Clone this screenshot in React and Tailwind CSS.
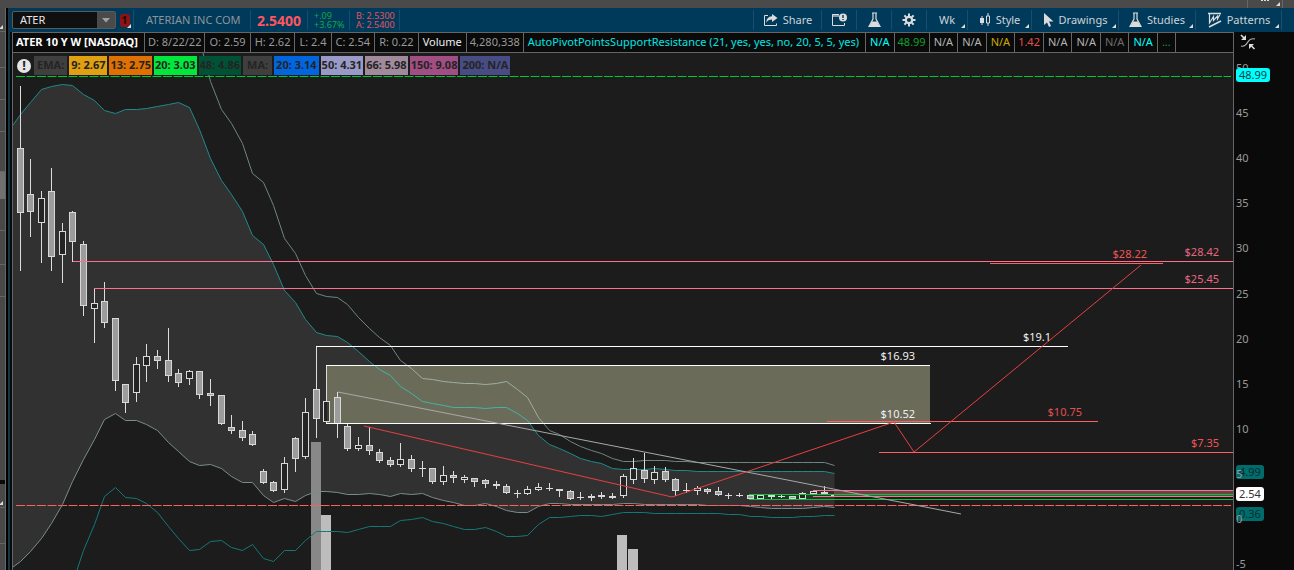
const INFO_CELLS = [
  { text: "ATER 10 Y W [NASDAQ]", style: "font-bold text-white pl-[3px] pr-[6px]" },
  { text: "D: 8/22/22", style: "text-[#999999] px-[3px]" },
  { text: "O: 2.59", style: "text-[#999999] px-[4px]" },
  { text: "H: 2.62", style: "text-[#999999] px-[4px]" },
  { text: "L: 2.4", style: "text-[#999999] px-[4px]" },
  { text: "C: 2.54", style: "text-[#999999] px-[4px]" },
  { text: "R: 0.22", style: "text-[#999999] px-[4px]" },
  { text: "Volume", style: "text-[#eeeeee] px-[4px]" },
  { text: "4,280,338", style: "text-[#999999] px-[3px]" },
  {
    text: "AutoPivotPointsSupportResistance (21, yes, yes, no, 20, 5, 5, yes)",
    style: "text-[#00e5e5] pl-[4px] pr-[6px]",
  },
  { text: "N/A", style: "text-[#00ffff] px-[4px]" },
  { text: "48.99", style: "text-[#0ea02c] px-[3px]" },
  { text: "N/A", style: "text-[#b4b4b4] px-[4px]" },
  { text: "N/A", style: "text-[#b4b4b4] px-[4px]" },
  { text: "N/A", style: "text-[#ccaa00] px-[4px]" },
  { text: "1.42", style: "text-[#e05050] px-[3px]" },
  { text: "N/A", style: "text-[#b4b4b4] px-[4px]" },
  { text: "N/A", style: "text-[#b4b4b4] px-[4px]" },
  { text: "N/A", style: "text-[#6e6e6e] px-[4px]" },
  { text: "N/A", style: "text-[#00ffff] px-[4px]" },
  { text: "...", style: "text-[#0ea02c] px-[4px]" },
];

const AVERAGES = [
  { text: "EMA:", style: "bg-[#3f3f3f] px-[3px]" },
  { text: "9: 2.67", style: "bg-[#e0a010] px-[2px]" },
  { text: "13: 2.75", style: "bg-[#e07000] px-[1px]" },
  { text: "20: 3.03", style: "bg-[#00e83c] px-[1px]" },
  { text: "48: 4.86", style: "bg-[#005236] px-[1px]" },
  { text: "MA:", style: "bg-[#3f3f3f] px-[4px]" },
  { text: "20: 3.14", style: "bg-[#0066e0] px-[2px]" },
  { text: "50: 4.31", style: "bg-[#9a9ac8] px-[1px]" },
  { text: "66: 5.98", style: "bg-[#a08a9c] px-[1px]" },
  { text: "150: 9.08", style: "bg-[#a04e84] px-[1px]" },
  { text: "200: N/A", style: "bg-[#484c84] px-[2px]" },
];

// [high, body top, body bottom, low, hollow]
const CANDLES = [
  [86, 148, 213, 270, 0], [159, 194, 212, 236, 0], [191, 198, 223, 262, 1],
  [168, 191, 257, 270, 0], [223, 231, 255, 282, 1], [211, 212, 242, 261, 0],
  [241, 244, 306, 315, 0], [288, 303, 309, 342, 1], [282, 301, 323, 327, 0],
  [318, 318, 381, 390, 0], [384, 384, 403, 412, 0], [357, 364, 393, 401, 1],
  [344, 356, 366, 381, 1], [350, 356, 361, 368, 0], [328, 360, 376, 381, 0],
  [369, 373, 383, 386, 0], [370, 371, 379, 384, 1], [371, 371, 395, 398, 0],
  [379, 393, 396, 405, 0], [395, 395, 424, 424, 0], [415, 427, 431, 433, 0],
  [421, 430, 438, 440, 0], [431, 434, 445, 445, 0], [469, 471, 483, 483, 0],
  [481, 482, 491, 491, 0], [457, 463, 490, 492, 1], [437, 438, 459, 471, 0],
  [398, 412, 457, 458, 1], [346, 389, 419, 437, 0], [365, 401, 422, 423, 1],
  [392, 397, 424, 437, 0], [424, 426, 449, 450, 0], [437, 445, 449, 450, 1],
  [427, 445, 451, 454, 0], [449, 452, 461, 462, 0], [457, 460, 465, 466, 0],
  [443, 459, 465, 466, 1], [455, 459, 469, 471, 0], [461, 468, 469, 476, 0],
  [468, 468, 482, 483, 0], [466, 475, 482, 484, 1], [471, 475, 478, 482, 0],
  [475, 477, 480, 482, 1], [478, 478, 482, 486, 0], [479, 480, 484, 487, 0],
  [481, 484, 486, 488, 0], [484, 486, 493, 493, 0], [490, 493, 494, 497, 0],
  [486, 489, 494, 494, 1], [483, 487, 490, 490, 1], [483, 488, 489, 490, 0],
  [489, 489, 491, 496, 0], [490, 491, 499, 499, 0], [492, 497, 498, 499, 0],
  [494, 496, 498, 500, 0], [492, 495, 497, 498, 0], [493, 496, 498, 498, 0],
  [474, 476, 496, 497, 1], [458, 468, 480, 483, 1], [453, 470, 479, 482, 0],
  [466, 472, 480, 483, 1], [467, 471, 480, 481, 0], [478, 479, 491, 495, 0],
  [483, 490, 491, 492, 0], [486, 488, 491, 494, 1], [488, 489, 492, 493, 0],
  [487, 491, 495, 495, 0], [493, 495, 496, 498, 0], [493, 495, 496, 496, 0],
  [495, 495, 499, 499, 0], [495, 495, 499, 499, 1], [494, 495, 497, 498, 0],
  [495, 496, 497, 497, 0], [496, 496, 499, 499, 0], [492, 493, 499, 499, 1],
  [490, 491, 494, 494, 1], [486, 492, 494, 494, 0], [495, 495, 496, 496, 0],
];

const UPPER = [
  114, 102, 89, 86, 84, 85, 94, 100, 110, 113, 109, 109, 108, 106, 104, 102,
  107, 129, 158, 180, 194, 211, 235, 244, 264, 290, 302, 319, 332, 335, 336,
  342, 351, 361, 369, 375, 386, 393, 401, 403, 405, 407, 407, 407, 408, 407,
  407, 413, 420, 435, 444, 448, 453, 458, 461, 463, 468, 469, 469, 469, 468,
  469, 470, 470, 471, 471, 471, 471, 471, 471, 471, 471, 471, 471, 471, 471,
  471, 473,
];

// starts at bar 18
const OUTER_UPPER = [
  81, 109, 123, 143, 173, 182, 205, 238, 253, 275, 293, 296, 297, 304, 317,
  328, 337, 345, 360, 368, 378, 379, 381, 382, 383, 383, 384, 383, 381, 389,
  397, 417, 430, 434, 441, 446, 450, 453, 458, 461, 461, 460, 460, 460, 461,
  461, 462, 462, 462, 462, 462, 462, 462, 462, 462, 462, 462, 462, 462, 465,
];

const LOWER = [
  561, 551, 538, 523, 504, 481, 459, 439, 419, 413, 420, 420, 424, 430, 442,
  451, 461, 465, 464, 468, 476, 482, 482, 495, 502, 498, 501, 495, 491, 491,
  492, 494, 494, 493, 494, 496, 493, 494, 493, 497, 500, 502, 505, 505, 503,
  506, 510, 512, 512, 506, 503, 503, 504, 504, 504, 504, 504, 503, 503, 504,
  504, 504, 504, 504, 504, 505, 505, 505, 505, 506, 507, 508, 508, 508, 508,
  507, 506, 507,
];

// starts at bar 6
const OUTER_LOWER = [
  550, 524, 496, 487, 497, 498, 503, 512, 526, 538, 550, 549, 541, 540, 547,
  550, 544, 558, 561, 550, 550, 540, 531, 531, 531, 532, 529, 526, 526, 526,
  520, 519, 517, 521, 523, 526, 529, 529, 527, 531, 536, 536, 535, 524, 517,
  517, 516, 515, 515, 516, 514, 512, 512, 512, 513, 513, 513, 513, 513, 513,
  513, 514, 514, 516, 516, 517, 517, 517, 516, 516, 515, 515,
];

const LEVELS = [
  { from: 73, to: 1233, y: 261, color: "#ff7090" },
  { from: 94, to: 1233, y: 288, color: "#ff7090" },
  { from: 990, to: 1163, y: 263, color: "#ff5f5f" },
  { from: 316, to: 1068, y: 346, color: "#ffffff" },
  { from: 326, to: 930, y: 365, color: "#ffffff" },
  { from: 326, to: 931, y: 423, color: "#ffffff" },
  { from: 827, to: 1098, y: 421, color: "#ff5f5f" },
  { from: 879, to: 1233, y: 452, color: "#ff5f5f" },
  { from: 813, to: 1233, y: 490, color: "#ff7090" },
  { from: 813, to: 1233, y: 496, color: "#ff7090" },
  { from: 749, to: 1233, y: 494, color: "#00c832" },
  { from: 749, to: 1233, y: 499, color: "#00c832" },
];

const LEVEL_LABELS = [
  { x: 1219, y: 256, text: "$28.42", color: "#e8687f" },
  { x: 1147, y: 258, text: "$28.22", color: "#f05555" },
  { x: 1219, y: 283, text: "$25.45", color: "#e8687f" },
  { x: 1051, y: 341, text: "$19.1", color: "#f0f0f0" },
  { x: 915, y: 360, text: "$16.93", color: "#f0f0f0" },
  { x: 915, y: 418, text: "$10.52", color: "#f0f0f0" },
  { x: 1082, y: 416, text: "$10.75", color: "#e05050" },
  { x: 1219, y: 447, text: "$7.35", color: "#f05555" },
];

const TICKS = [50, 45, 40, 35, 30, 25, 20, 15, 10, 5, 0, -5];

const barX = (i) => Math.floor(20 + i * 10.58);
const priceY = (price) => Math.round(519 - price * 9.02);
const toPoints = (values, start = 0) =>
  values.map((y, i) => `${barX(start + i) + 0.5},${y + 0.5}`);

function Corner() {
  return (
    <span className="absolute right-[2px] bottom-[2px] h-[4px] w-[4px] bg-[#dddddd] [clip-path:polygon(100%_0,100%_100%,0_100%)]" />
  );
}

function ShareIcon() {
  return (
    <svg width="15" height="14" viewBox="0 0 15 14" aria-hidden="true">
      <path d="M5 2.5H1.5V12.5H13.5V10.5" fill="none" stroke="#dcdcdc" />
      <path d="M9 1L14.5 5L9 9V6.6C6.2 6.6 4.6 7.6 3.2 9.8C3.4 6 5.4 3.6 9 3.3Z" fill="#dcdcdc" />
    </svg>
  );
}

function CalendarAlertIcon() {
  return (
    <svg width="15" height="14" viewBox="0 0 15 14" aria-hidden="true">
      <path d="M7 1.5H.5V12.5H12.5V10" fill="none" stroke="#dcdcdc" />
      <path d="M0 1H7V4H0Z" fill="#dcdcdc" opacity=".6" />
      <circle cx="11" cy="4.5" r="4" fill="#dcdcdc" />
      <path d="M11 2V5M11 6V7" stroke="#003a5a" strokeWidth="1.4" />
    </svg>
  );
}

function FlaskIcon() {
  return (
    <svg width="13" height="16" viewBox="0 0 13 16" aria-hidden="true">
      <path d="M4 1H9M5 1V7L1 14.5H12L8 7V1" fill="none" stroke="#dcdcdc" strokeWidth="1.2" />
      <path d="M4 9.5H9L11.5 14.5H1.5Z" fill="#dcdcdc" />
    </svg>
  );
}

function GearIcon() {
  return (
    <svg width="14" height="14" viewBox="0 0 14 14" aria-hidden="true">
      <g stroke="#dcdcdc" strokeWidth="2">
        <path d="M7 .5V3M7 11V13.5M.5 7H3M11 7H13.5M2.4 2.4L4.2 4.2M9.8 9.8L11.6 11.6M11.6 2.4L9.8 4.2M4.2 9.8L2.4 11.6" />
        <circle cx="7" cy="7" r="3.2" fill="none" strokeWidth="2.2" />
      </g>
    </svg>
  );
}

function CandleIcon() {
  return (
    <svg width="12" height="14" viewBox="0 0 12 14" aria-hidden="true">
      <path d="M3 3V12M9 0V3M9 10V13" stroke="#dcdcdc" />
      <path d="M1 5H5V10H1Z" fill="#dcdcdc" />
      <path d="M7.5 3H10.5V10H7.5Z" fill="none" stroke="#dcdcdc" />
    </svg>
  );
}

function CursorIcon() {
  return (
    <svg width="11" height="14" viewBox="0 0 11 14" aria-hidden="true">
      <path d="M1 0V12L4 9.5L6 14L8 13L6 8.5H10.5Z" fill="#dcdcdc" />
    </svg>
  );
}

function PatternIcon() {
  return (
    <svg width="15" height="16" viewBox="0 0 15 16" aria-hidden="true">
      <g fill="none" stroke="#dcdcdc">
        <path d="M1 1.5H14M2 15L14 9" strokeWidth="1.6" />
        <path d="M2.5 2V11L6.5 4.5V8.5L10.5 4V7L13 2.5" strokeWidth="1.2" />
      </g>
    </svg>
  );
}

const TOOLS = [
  { label: "Share", icon: ShareIcon, text: true, width: "w-[68px]" },
  { label: "Calendar", icon: CalendarAlertIcon, width: "w-[35px]" },
  { label: "Quick study", icon: FlaskIcon, width: "w-[35px]" },
  { label: "Settings", icon: GearIcon, width: "w-[35px]" },
  { label: "Wk", text: true, corner: true, width: "w-[41px]" },
  { label: "Style", icon: CandleIcon, text: true, corner: true, width: "w-[64px]" },
  { label: "Drawings", icon: CursorIcon, text: true, corner: true, width: "w-[87px]" },
  { label: "Studies", icon: FlaskIcon, text: true, corner: true, width: "w-[77px]" },
  { label: "Patterns", icon: PatternIcon, text: true, corner: true, width: "w-[86px]" },
];

function Toolbar() {
  return (
    <div className="flex h-6 items-center bg-[#003a5a] py-[2px] pl-[2px]">
      <div className="flex h-[18px] w-[104px] shrink-0 rounded-[2px] border border-[#5a5a5a] bg-[#101010]">
        <input
          aria-label="Symbol"
          defaultValue="ATER"
          className="w-[84px] min-w-0 bg-transparent pl-[7px] text-[11px] text-[#e6e6e6] outline-none"
        />
        <button aria-label="Choose symbol" className="flex flex-1 items-center justify-center bg-[#4a4a4a]">
          <span className="h-[5px] w-[9px] bg-[#a0a0a0] [clip-path:polygon(0_0,100%_0,50%_100%)]" />
        </button>
      </div>
      <button className="relative flex h-full w-[18px] shrink-0 items-center justify-center border-r border-[#1a4c6b]">
        <span className="flex h-[13px] w-[10px] items-center justify-center rounded-[2px] bg-[#8c1414] text-[11px] font-bold text-[#2c0808]">
          1
        </span>
        <Corner />
      </button>
      <div className="flex h-full w-[117px] shrink-0 items-center border-r border-[#1a4c6b] pl-[12px] text-[11px] whitespace-nowrap text-[#8c959b]">
        ATERIAN INC COM
      </div>
      <div className="flex h-full w-[57px] shrink-0 items-center justify-center border-r border-[#1a4c6b] text-[14px] font-bold text-[#ff5560]">
        2.5400
      </div>
      <div className="flex h-full w-[42px] shrink-0 flex-col justify-center border-r border-[#1a4c6b] pl-[6px] text-[9px] leading-[9px] text-[#10a848]">
        <span>+.09</span>
        <span>+3.67%</span>
      </div>
      <div className="flex h-full w-[50px] shrink-0 flex-col justify-center border-r border-[#1a4c6b] pl-[6px] text-[9px] leading-[9px] whitespace-nowrap text-[#e05560]">
        <span>B: 2.5300</span>
        <span>A: 2.5400</span>
      </div>
      <div className="flex h-full flex-1 justify-end">
        <div className="flex border-l border-[#1a4c6b]">
          {TOOLS.map(({ label, icon: Icon, text, corner, width }) => (
            <button
              key={label}
              aria-label={label}
              className={`relative flex h-full items-center justify-center gap-[5px] border-r border-[#1a4c6b] text-[11px] text-[#cdd3d7] ${width}`}
            >
              {Icon && <Icon />}
              {text && label}
              {corner && <Corner />}
            </button>
          ))}
        </div>
        <div className="w-3" />
      </div>
    </div>
  );
}

function InfoBar() {
  return (
    <div className="flex h-[21px] bg-[#0a0a0a]">
      <div className="flex min-w-0 flex-1 overflow-hidden border border-[#666666] text-[11px] whitespace-nowrap">
        {INFO_CELLS.map((cell, i) => (
          <span
            key={i}
            className={`flex shrink-0 items-center border-r border-[#666666] ${cell.style}`}
          >
            {cell.text}
          </span>
        ))}
      </div>
      <div className="flex w-[60px] shrink-0 items-start pt-[2px] pl-[6px]">
        <button aria-label="Fit chart">
          <svg width="16" height="16" viewBox="0 0 16 16" aria-hidden="true">
            <path d="M1 12C4 13 6 11 7.5 8.5S11 4 15 5" fill="none" stroke="#b4b4b4" strokeWidth="1.2" />
            <path d="M1 1L4 4M14.5 15L11.5 12" stroke="#dddddd" strokeWidth="1.6" />
            <path d="M6 1V6H1ZM9 15V10H14Z" fill="#dddddd" />
          </svg>
        </button>
      </div>
    </div>
  );
}

function Candle({ index, data }) {
  const [high, top, bottom, low, hollow] = data;
  const x = barX(index);
  const height = bottom - top;
  return (
    <g>
      <path
        d={`M${x + 0.5} ${high}V${top}M${x + 0.5} ${bottom}V${low + 1}`}
        stroke="#dcdcdc"
      />
      {height > 1 ? (
        <rect
          x={x - 2.5}
          y={top + 0.5}
          width="6"
          height={height - 1}
          fill={hollow ? "#1c1c1c" : "#9c9c9c"}
          fillOpacity={hollow ? 0.6 : 1}
          stroke="#d8d8d8"
        />
      ) : (
        <rect x={x - 3} y={top} width="7" height="1" fill="#dcdcdc" />
      )}
    </g>
  );
}

function PriceTag({ y, text, fill, color, width = 28 }) {
  return (
    <g>
      <rect x="1236" y={y - 7} width={width} height="14" rx="3" fill={fill} />
      <text x={1236 + width / 2} y={y + 4} fill={color} textAnchor="middle">
        {text}
      </text>
    </g>
  );
}

function Chart() {
  const upper = ["13,125", ...toPoints(UPPER)];
  const lower = ["13,567", ...toPoints(LOWER)];
  const outerUpper = ["203,53", ...toPoints(OUTER_UPPER, 18)];
  const outerLower = ["77,570", ...toPoints(OUTER_LOWER, 6)];
  const cloud = [...upper, ...[...lower].reverse()].join(" ");

  return (
    <svg
      viewBox="12 53 1282 517"
      className="block h-auto w-full bg-[#0a0a0a]"
      fontSize="11"
      fontFamily="'Noto Sans', sans-serif"
      role="img"
      aria-label="ATER weekly price chart"
    >
      <defs>
        <clipPath id="zone">
          <rect x="327" y="366" width="603" height="57" />
        </clipPath>
      </defs>

      <rect x="12" y="53" width="1221" height="517" fill="#1c1c1c" />
      <polygon points={cloud} fill="#313131" />

      {/* volume */}
      <rect x="311" y="442" width="10" height="128" fill="#888888" />
      <rect x="321" y="515" width="10" height="55" fill="#bdbdbd" />
      <rect x="617" y="535" width="10" height="35" fill="#bdbdbd" />
      <rect x="628" y="549" width="10" height="21" fill="#bdbdbd" />

      {/* bands */}
      <g fill="none">
        <polyline points={upper.join(" ")} stroke="#1f8a8a" />
        <polyline points={outerLower.join(" ")} stroke="#157878" />
        <polyline points={outerUpper.join(" ")} stroke="#6c8683" />
        <polyline points={lower.join(" ")} stroke="#788d8b" />
      </g>

      {/* supply zone */}
      <g fill="none" clipPath="url(#zone)">
        <rect x="327" y="366" width="603" height="57" fill="#6b6b5a" />
        <polyline points={upper.join(" ")} stroke="#42b4a6" />
        <polyline points={outerUpper.join(" ")} stroke="#9db0a2" />
      </g>

      <path d="M16 76.5H1231" stroke="#00c832" strokeDasharray="9 1.5" />
      <path d="M16 505.5H1231" stroke="#ff5f5f" strokeDasharray="9 1.5" />

      {CANDLES.map((data, i) => (
        <Candle key={i} index={i} data={data} />
      ))}

      <rect x="834" y="491" width="399" height="5" fill="#604848" />
      {LEVELS.map(({ from, to, y, color }) => (
        <path key={`${from}-${y}`} d={`M${from} ${y + 0.5}H${to}`} stroke={color} />
      ))}

      {/* drawings */}
      <path d="M338 392L961 514" stroke="#a8a8a8" />
      <path d="M364 426L672 497L894 422L914 452L1141 265" fill="none" stroke="#e84040" />

      {LEVEL_LABELS.map(({ x, y, text, color }) => (
        <text key={text} x={x} y={y} fill={color} textAnchor="end">
          {text}
        </text>
      ))}

      {/* price axis */}
      <path d="M1233.5 53V570" stroke="#666666" />
      <path d="M12.5 53V570" stroke="#666666" />
      <PriceTag y={472} text="4.99" fill="#006c6c" color="#062e2e" />
      <PriceTag y={514} text="0.36" fill="#006c6c" color="#062e2e" />
      <g fill="#9a9a9a">
        {TICKS.map((tick) => (
          <text key={tick} x="1236" y={priceY(tick) + 4}>
            {tick}
          </text>
        ))}
      </g>
      <PriceTag y={494} text="2.54" fill="#ffffff" color="#333333" />
      <PriceTag y={75} text="48.99" fill="#00ffff" color="#0a4444" width={34} />
    </svg>
  );
}

export default function App() {
  return (
    <div className="min-h-screen overflow-hidden bg-[#0a0a0a] font-['Noto_Sans',sans-serif]">
      <div className="flex h-2 justify-end bg-[#4a4a4a]">
        <div className="relative flex w-[36px] items-start justify-center gap-[1px] border-x border-[#666666]">
          <span className="h-[1px] w-[2px] bg-[#dddddd]" />
          <span className="h-[1px] w-[2px] bg-[#dddddd]" />
          <span className="h-[1px] w-[2px] bg-[#dddddd]" />
          <Corner />
        </div>
        <div className="w-[11px]" />
      </div>
      <div className="flex">
        {/* collapsed side panel */}
        <div className="flex w-[6px] shrink-0 flex-col border-r border-[#666666] bg-[#484848]">
          <div className="relative h-6 border-b border-[#666666]">
            <Corner />
          </div>
          <div className="h-9 border-b border-[#666666]" />
          <div className="h-8 border-b border-[#666666]" />
          <div className="h-8 border-b border-[#666666]" />
          <div className="h-10 border-b border-[#666666]" />
          <div className="h-[27px] bg-[#707070]" />
          <div className="h-8 border-b border-[#666666]" />
          <div className="h-[34px] border-b border-[#666666]" />
          <div className="h-8 border-b border-[#666666]" />
          <div className="flex-1" />
          <div className="h-[4px] bg-[#0a0a0a]" />
          <div className="relative h-6 border-b border-[#666666]">
            <Corner />
          </div>
          <div className="h-9 border-b border-[#666666]" />
          <div className="h-[26px]" />
        </div>
        <div className="w-[3px] shrink-0 border-r border-[#303030] bg-black" />
        <div className="w-px shrink-0 bg-[#003a5a]" />
        <div className="min-w-0 flex-1">
          <Toolbar />
          <div className="pl-[2px]">
            <InfoBar />
            <div className="relative">
              <Chart />
              <div className="absolute top-[3px] left-[5px] flex items-center gap-[2px] text-[11px] font-bold text-[#242424]">
                <span className="mr-[1px] flex h-[14px] w-[14px] items-center justify-center rounded-full bg-[#e6e6e6] text-[13px]">
                  !
                </span>
                {AVERAGES.map((item, i) => (
                  <span key={i} className={`flex h-[19px] items-center ${item.style}`}>
                    {item.text}
                  </span>
                ))}
              </div>
            </div>
          </div>
        </div>
      </div>
    </div>
  );
}
